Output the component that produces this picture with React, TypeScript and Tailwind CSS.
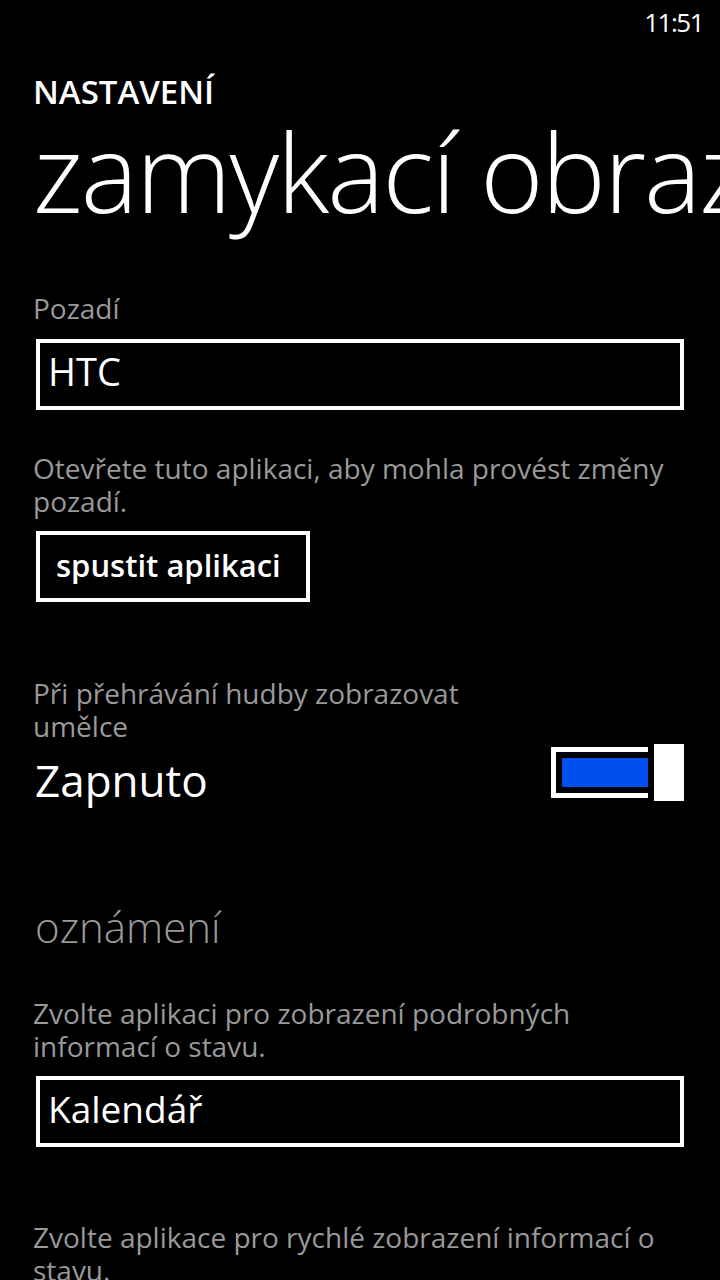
import React from "react";

const F = { fontFamily: '"Open Sans", "Noto Sans", "Liberation Sans", sans-serif' };

export default function App() {
  return (
    <div className="w-[720px] h-[1280px] bg-black text-white overflow-hidden flex flex-col" style={F}>
      {/* status bar */}
      <div className="h-[44px] pt-[2px] flex justify-end pr-[17px]">
        <span className="text-[26px] leading-[40px] tracking-[-1.5px]">11:51</span>
      </div>

      <div className="pl-[33px] flex flex-col">
        <div className="mt-[30px] text-[33px] leading-[40px] font-semibold">NASTAVENÍ</div>
        <div className="text-[108px] leading-[120px] font-light whitespace-nowrap tracking-[-2px]">zamykací obraz</div>

        <div className="mt-[60px] text-[28px] leading-[33px] text-[#999999]">Pozadí</div>
        <div className="mt-[14px] ml-[3px] w-[648px] h-[71px] border-4 border-white pl-[8px]">
          <span className="text-[38px] leading-[57px] block">HTC</span>
        </div>

        <div className="mt-[42px] text-[28px] leading-[33px] text-[#999999]">
          <div className="whitespace-nowrap">Otevřete tuto aplikaci, aby mohla provést změny</div>
          <div className="whitespace-nowrap">pozadí.</div>
        </div>
        <div className="mt-[13px] ml-[3px] w-[274px] h-[71px] border-4 border-white pl-[16px]">
          <span className="text-[31px] leading-[60px] font-semibold block whitespace-nowrap">spustit aplikaci</span>
        </div>

        <div className="mt-[75px] text-[28px] leading-[33px] text-[#999999]">
          <div className="whitespace-nowrap">Při přehrávání hudby zobrazovat</div>
          <div className="whitespace-nowrap">umělce</div>
        </div>
        <div className="mt-[7px] h-[60px] flex justify-between pr-[36px]">
          <span className="text-[44px] leading-[60px] ml-[2px]">Zapnuto</span>
          <div className="relative w-[133px] h-[57px] mt-[-6px]">
            <div className="absolute left-0 top-[3px] w-[133px] h-[51px] border-[5px] border-white p-[6px]">
              <div className="w-full h-full bg-[#0050ef]" />
            </div>
            <div className="absolute right-[-6px] top-[-6px] w-[42px] h-[69px] border-[6px] border-black bg-white" />
          </div>
        </div>

        <div className="mt-[87px] ml-[2px] text-[42px] leading-[60px] font-light text-[#999999]">oznámení</div>

        <div className="mt-[40px] text-[28px] leading-[33px] text-[#999999]">
          <div className="whitespace-nowrap">Zvolte aplikaci pro zobrazení podrobných</div>
          <div className="whitespace-nowrap">informací o stavu.</div>
        </div>
        <div className="mt-[13px] ml-[3px] w-[648px] h-[71px] border-4 border-white pl-[8px]">
          <span className="text-[37px] leading-[57px] block">Kalendář</span>
        </div>

        <div className="mt-[74px] text-[28px] leading-[33px] text-[#999999]">
          <div className="whitespace-nowrap">Zvolte aplikace pro rychlé zobrazení informací o</div>
          <div className="whitespace-nowrap">stavu.</div>
        </div>
      </div>
    </div>
  );
}
